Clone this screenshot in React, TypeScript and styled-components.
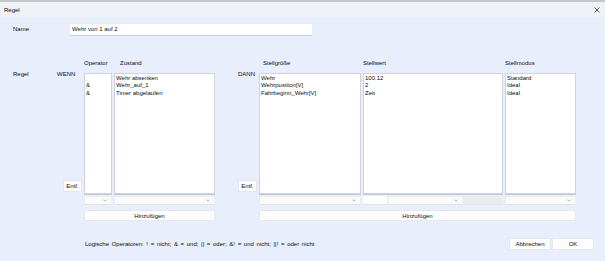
import React from 'react';
import styled, { createGlobalStyle } from 'styled-components';

const GlobalStyle = createGlobalStyle`
    html, body {
        margin: 0;
        padding: 0;
        background: #e8eefb;
    }
    body {
        font-family: "Liberation Sans", Arial, sans-serif;
        font-size: 6px;
        color: #0d0d0d;
    }
`;

const Window = styled.div`
    width: 605px;
    height: 261px;
    display: flex;
    flex-direction: column;
    overflow: hidden;
    background: #e8eefb;
`;

const BehindStrip = styled.div`
    height: 2px;
    background: #c4c6cc;
`;

const TitleBar = styled.div`
    height: 15px;
    display: flex;
    align-items: center;
    justify-content: space-between;
    padding: 0 5px 0 4px;
    background: #eef1f6;
`;

const Body = styled.div`
    flex: 1;
    display: flex;
    flex-direction: column;
    padding-left: 13px;
`;

const NameRow = styled.div`
    display: flex;
    align-items: center;
    margin-top: 7px;
    height: 12px;
`;

const Label = styled.div<{ $width?: number }>`
    width: ${({ $width }) => ($width ? `${$width}px` : 'auto')};
    flex-shrink: 0;
    line-height: 7.3px;
    white-space: nowrap;
`;

const TextInput = styled.div`
    width: 242px;
    height: 12px;
    box-sizing: border-box;
    background: #ffffff;
    border-bottom: 1px solid #c7ccd6;
    padding: 0 2px;
    line-height: 11px;
`;

const RuleArea = styled.div`
    display: flex;
    margin-top: 23px;
`;

const RegelLabel = styled(Label)`
    margin-top: 12px;
`;

const Panel = styled.div<{ $cols: string }>`
    display: grid;
    grid-template-columns: ${({ $cols }) => $cols};
    grid-template-rows: 14px 121px 11px 16px;
    column-gap: 2px;
`;

const Spacer = styled.div<{ $width: number }>`
    width: ${({ $width }) => $width}px;
    flex-shrink: 0;
`;

const Header = styled.div<{ $indent?: number }>`
    align-self: start;
    padding-left: ${({ $indent }) => $indent ?? 0}px;
    line-height: 8px;
    white-space: nowrap;
`;

const SideCell = styled.div`
    display: flex;
    flex-direction: column;
    justify-content: space-between;
`;

const SideLabel = styled.div`
    margin-top: -2px;
    line-height: 7.3px;
`;

const SmallButton = styled.div`
    align-self: flex-end;
    width: 19px;
    height: 12px;
    margin-bottom: 2px;
    box-sizing: border-box;
    background: #fdfdfd;
    border: 1px solid #e3e6ec;
    border-radius: 1px;
    display: flex;
    align-items: center;
    justify-content: center;
`;

const ListBox = styled.div`
    background: #ffffff;
    border: 1px solid #cfd3db;
    box-shadow: 0 1px 0 #c3c8d1;
    box-sizing: border-box;
    padding: 1px 1px 0;
    line-height: 7.33px;
    white-space: nowrap;
    overflow: hidden;
`;

const BottomCell = styled.div`
    align-self: end;
    display: flex;
    gap: 1px;
`;

const Combo = styled.div<{ $width?: number }>`
    flex: ${({ $width }) => ($width ? `0 0 ${$width}px` : '1')};
    height: 9px;
    box-sizing: border-box;
    background: #fbfbfc;
    border: 1px solid #edeef1;
    border-bottom-color: #dfe2e7;
    display: flex;
    align-items: center;
    justify-content: flex-end;
    padding-right: 4px;
`;

const Field = styled.div<{ $width: number; $disabled?: boolean }>`
    flex: 0 0 ${({ $width }) => $width}px;
    height: 9px;
    box-sizing: border-box;
    background: ${({ $disabled }) => ($disabled ? '#ececee' : '#ffffff')};
    border-bottom: 1px solid ${({ $disabled }) => ($disabled ? '#e2e2e4' : '#dfe2e7')};
`;

const WideButton = styled.div<{ $span: string }>`
    grid-column: ${({ $span }) => $span};
    align-self: end;
    height: 11px;
    box-sizing: border-box;
    background: #fdfdfd;
    border: 1px solid #e4e7ec;
    border-radius: 1px;
    display: flex;
    align-items: center;
    justify-content: center;
`;

const Footer = styled.div`
    display: flex;
    align-items: center;
    margin-top: 17px;
    height: 12px;
`;

const Hint = styled.div`
    margin-left: 72px;
    white-space: nowrap;
    word-spacing: 1px;
`;

const FooterButtons = styled.div`
    margin-left: auto;
    margin-right: 11px;
    display: flex;
    gap: 1px;
`;

const DialogButton = styled.div`
    width: 42px;
    height: 12px;
    box-sizing: border-box;
    background: #fdfdfd;
    border: 1px solid #e4e7ec;
    border-radius: 1px;
    display: flex;
    align-items: center;
    justify-content: center;
`;

const Chevron = () => (
    <svg width="4" height="3" viewBox="0 0 4 3">
        <path d="M0.3 0.6 L2 2.3 L3.7 0.6" fill="none" stroke="#8c8f95" strokeWidth="0.6" />
    </svg>
);

const CloseIcon = () => (
    <svg width="6" height="6" viewBox="0 0 6 6">
        <path d="M0.5 0.5 L5.5 5.5 M5.5 0.5 L0.5 5.5" stroke="#3a3a3a" strokeWidth="0.8" />
    </svg>
);

const Lines: React.FC<{ items: string[] }> = ({ items }) => (
    <>
        {items.map((item, i) => (
            <div key={i}>{item || '\u00a0'}</div>
        ))}
    </>
);

export default function App() {
    return (
        <>
            <GlobalStyle />
            <Window>
                <BehindStrip />
                <TitleBar>
                    <span>Regel</span>
                    <CloseIcon />
                </TitleBar>
                <Body>
                    <NameRow>
                        <Label $width={57}>Name</Label>
                        <TextInput>Wehr von 1 auf 2</TextInput>
                    </NameRow>

                    <RuleArea>
                        <RegelLabel $width={44}>Regel</RegelLabel>

                        <Panel $cols="25px 28px 101px">
                            <div />
                            <Header $indent={0}>Operator</Header>
                            <Header $indent={6}>Zustand</Header>

                            <SideCell>
                                <SideLabel>WENN</SideLabel>
                                <SmallButton>Entf.</SmallButton>
                            </SideCell>
                            <ListBox>
                                <Lines items={['', '&', '&']} />
                            </ListBox>
                            <ListBox>
                                <Lines items={['Wehr absenken', 'Wehr_auf_1', 'Timer abgelaufen']} />
                            </ListBox>

                            <div />
                            <BottomCell>
                                <Combo><Chevron /></Combo>
                            </BottomCell>
                            <BottomCell>
                                <Combo><Chevron /></Combo>
                            </BottomCell>

                            <WideButton $span="2 / 4">Hinzufügen</WideButton>
                        </Panel>

                        <Spacer $width={23} />

                        <Panel $cols="19px 102px 140px 71px">
                            <div />
                            <Header $indent={4}>Stellgröße</Header>
                            <Header>Stellwert</Header>
                            <Header>Stellmodus</Header>

                            <SideCell>
                                <SideLabel>DANN</SideLabel>
                                <SmallButton>Entf.</SmallButton>
                            </SideCell>
                            <ListBox>
                                <Lines items={['Wehr', 'Wehrposition[V]', 'Fahrbeginn_Wehr[V]']} />
                            </ListBox>
                            <ListBox>
                                <Lines items={['100.12', '2', 'Zeit']} />
                            </ListBox>
                            <ListBox>
                                <Lines items={['Standard', 'Ideal', 'Ideal']} />
                            </ListBox>

                            <div />
                            <BottomCell>
                                <Combo><Chevron /></Combo>
                            </BottomCell>
                            <BottomCell>
                                <Field $width={24} />
                                <Combo $width={75}><Chevron /></Combo>
                                <Field $width={39} $disabled />
                            </BottomCell>
                            <BottomCell>
                                <Combo><Chevron /></Combo>
                            </BottomCell>

                            <WideButton $span="2 / 5">Hinzufügen</WideButton>
                        </Panel>
                    </RuleArea>

                    <Footer>
                        <Hint>Logische Operatoren: ! = nicht; &amp; = und; || = oder; &amp;! = und nicht; ||! = oder nicht</Hint>
                        <FooterButtons>
                            <DialogButton>Abbrechen</DialogButton>
                            <DialogButton>OK</DialogButton>
                        </FooterButtons>
                    </Footer>
                </Body>
            </Window>
        </>
    );
}
